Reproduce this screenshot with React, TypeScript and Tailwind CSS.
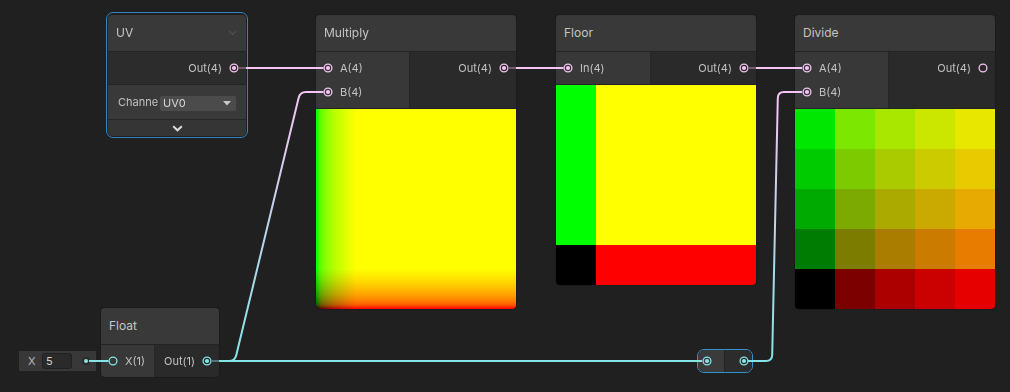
import React from 'react';

type C = 'pink' | 'cyan';

function PortIcon({ c, filled = true }: { c: C; filled?: boolean }) {
  const col = c === 'pink' ? '#f5c4f2' : '#84e4e7';
  return (
    <svg width="10" height="10" viewBox="0 0 10 10" className="block shrink-0">
      <circle cx="5" cy="5" r="3.9" fill="none" stroke={col} strokeWidth="1.3" />
      {filled && <circle cx="5" cy="5" r="2.1" fill={col} />}
    </svg>
  );
}

function Header({ title, chevron = false }: { title: string; chevron?: boolean }) {
  return (
    <div className="h-[37px] shrink-0 bg-[#393939] border-b border-[#232323] flex items-center justify-between pl-[8px] pr-[9px] text-[12px] text-[#c4c4c4]">
      <span>{title}</span>
      {chevron && (
        <svg width="9" height="6" viewBox="0 0 9 6">
          <polyline points="1,1 4.5,4.5 8,1" fill="none" stroke="#4f4f4f" strokeWidth="1.2" />
        </svg>
      )}
    </div>
  );
}

function InRow({ label, c, filled = true }: { label: string; c: C; filled?: boolean }) {
  return (
    <div className="h-6 flex items-center pl-[7px] gap-[7px] text-[11px] text-[#c2c2c2] whitespace-nowrap">
      <PortIcon c={c} filled={filled} />
      <span>{label}</span>
    </div>
  );
}

function OutRow({ label, c, filled = true }: { label: string; c: C; filled?: boolean }) {
  return (
    <div className="h-6 flex items-center justify-end pr-[7px] gap-[7px] text-[11px] text-[#c2c2c2] whitespace-nowrap">
      <span>{label}</span>
      <PortIcon c={c} filled={filled} />
    </div>
  );
}

function MultiplyPreview() {
  return (
    <div className="relative w-[200px] h-[200px] bg-[image:linear-gradient(to_right,#000000_0px,#590000_4px,#7c0000_8px,#950000_12px,#aa0000_16px,#bc0000_20px,#cb0000_24px,#da0000_28px,#e70000_32px,#f30000_36px,#ff0000_40px)]">
      <div className="absolute inset-0 mix-blend-screen bg-[image:linear-gradient(to_top,#000000_0px,#005900_4px,#007c00_8px,#009500_12px,#00aa00_16px,#00bc00_20px,#00cb00_24px,#00da00_28px,#00e700_32px,#00f300_36px,#00ff00_40px)]" />
    </div>
  );
}

function FloorPreview() {
  return (
    <div className="w-[200px] h-[200px] flex flex-col">
      <div className="h-[160px] flex">
        <div className="w-[40px] bg-[#00ff00]" />
        <div className="flex-1 bg-[#ffff00]" />
      </div>
      <div className="h-[40px] flex">
        <div className="w-[40px] bg-[#000000]" />
        <div className="flex-1 bg-[#ff0000]" />
      </div>
    </div>
  );
}

const divideCells = [
  'bg-[#00e700]', 'bg-[#7ce700]', 'bg-[#aae700]', 'bg-[#cbe700]', 'bg-[#e7e700]',
  'bg-[#00cb00]', 'bg-[#7ccb00]', 'bg-[#aacb00]', 'bg-[#cbcb00]', 'bg-[#e7cb00]',
  'bg-[#00aa00]', 'bg-[#7caa00]', 'bg-[#aaaa00]', 'bg-[#cbaa00]', 'bg-[#e7aa00]',
  'bg-[#007c00]', 'bg-[#7c7c00]', 'bg-[#aa7c00]', 'bg-[#cb7c00]', 'bg-[#e77c00]',
  'bg-[#000000]', 'bg-[#7c0000]', 'bg-[#aa0000]', 'bg-[#cb0000]', 'bg-[#e70000]',
];

function DividePreview() {
  return (
    <div className="w-[200px] h-[200px] grid grid-cols-5 grid-rows-5">
      {divideCells.map((cls, i) => (
        <div key={i} className={cls} />
      ))}
    </div>
  );
}

function Wires() {
  return (
    <svg
      className="absolute inset-0 z-10 pointer-events-none"
      width="1010"
      height="392"
      viewBox="0 0 1010 392"
    >
      <defs>
        <linearGradient id="g1" gradientUnits="userSpaceOnUse" x1="0" y1="361" x2="0" y2="92">
          <stop offset="0" stopColor="#84e4e7" />
          <stop offset="1" stopColor="#f5c4f2" />
        </linearGradient>
        <linearGradient id="g2" gradientUnits="userSpaceOnUse" x1="0" y1="361" x2="0" y2="92">
          <stop offset="0" stopColor="#84e4e7" />
          <stop offset="1" stopColor="#f5c4f2" />
        </linearGradient>
      </defs>
      <g strokeWidth="2" fill="none">
        <path d="M238.5 68 H246" stroke="#6c5c6b" />
        <path d="M508.5 68 H516" stroke="#6c5c6b" />
        <path d="M748.5 68 H756" stroke="#6c5c6b" />
        <path d="M212 361 H219" stroke="#4e7475" />
      </g>
      <g strokeWidth="2" fill="none" stroke="#f5c4f2">
        <path d="M246 68 H323.5" />
        <path d="M516 68 H563.5" />
        <path d="M756 68 H802" />
      </g>
      <g strokeWidth="2" fill="none" stroke="#84e4e7">
        <path d="M89 361 H108.5" />
        <path d="M219 361 H702" />
      </g>
      <path
        d="M219 361 H229 Q235 361 236.3 355 L298.6 98 Q300 92 306 92 H323.5"
        stroke="url(#g1)"
        strokeWidth="2"
        fill="none"
      />
      <path
        d="M748 361 H766 Q772 361 772.2 355 L777.8 98 Q778 92 784 92 H802"
        stroke="url(#g2)"
        strokeWidth="2"
        fill="none"
      />
    </svg>
  );
}

export default function App() {
  return (
    <div className="relative w-[1010px] h-[392px] bg-[#202020] overflow-hidden font-['Inter','Noto_Sans',sans-serif] select-none">
      {/* UV node */}
      <div className="absolute left-[108px] top-[15px] w-[138px]">
        <div className="absolute -inset-x-[2px] -top-[3px] -bottom-[2px] rounded-[7px] border border-[#2f85c0]" />
        <div className="relative flex flex-col rounded-[4px] overflow-hidden">
          <Header title="UV" chevron />
          <div className="h-[33px] bg-[#2c2c2c] border-b border-[#232323] py-1">
            <OutRow label="Out(4)" c="pink" />
          </div>
          <div className="h-[35px] bg-[#393939] border-b border-[#262626] flex items-center pl-[10px] pr-[9px]">
            <div className="w-[41px] whitespace-nowrap text-[11px] text-[#c2c2c2] mt-[1px]">Channe</div>
            <div className="flex-1 h-[17px] mt-[2px] rounded-[3px] bg-[#4b4b4b] border border-[#3a3a3a] flex items-center justify-between pl-[3px] pr-[5px] text-[11px] text-[#d6d6d6]">
              <span>UV0</span>
              <svg width="8" height="5" viewBox="0 0 8 5">
                <polygon points="0,0 8,0 4,4.5" fill="#c8c8c8" />
              </svg>
            </div>
          </div>
          <div className="h-[16px] bg-[#353535] flex items-center justify-center">
            <svg width="11" height="7" viewBox="0 0 11 7">
              <polyline points="1.2,1.2 5.5,5.3 9.8,1.2" fill="none" stroke="#dcdcdc" strokeWidth="2" />
            </svg>
          </div>
        </div>
      </div>

      {/* Multiply node */}
      <div className="absolute left-[316px] top-[15px] w-[200px] flex flex-col rounded-[4px] overflow-hidden shadow-[0_0_0_1px_#1b1b1b]">
        <Header title="Multiply" />
        <div className="h-[57px] flex border-b border-[#232323]">
          <div className="w-[94px] bg-[#383838] border-r border-[#262626] py-1">
            <InRow label="A(4)" c="pink" />
            <InRow label="B(4)" c="pink" />
          </div>
          <div className="flex-1 bg-[#2a2a2a] py-1">
            <OutRow label="Out(4)" c="pink" />
          </div>
        </div>
        <MultiplyPreview />
      </div>

      {/* Floor node */}
      <div className="absolute left-[556px] top-[15px] w-[200px] flex flex-col rounded-[4px] overflow-hidden shadow-[0_0_0_1px_#1b1b1b]">
        <Header title="Floor" />
        <div className="h-[33px] flex border-b border-[#232323]">
          <div className="w-[95px] bg-[#383838] border-r border-[#262626] py-1">
            <InRow label="In(4)" c="pink" />
          </div>
          <div className="flex-1 bg-[#2a2a2a] py-1">
            <OutRow label="Out(4)" c="pink" />
          </div>
        </div>
        <FloorPreview />
      </div>

      {/* Divide node */}
      <div className="absolute left-[795px] top-[15px] w-[200px] flex flex-col rounded-[4px] overflow-hidden shadow-[0_0_0_1px_#1b1b1b]">
        <Header title="Divide" />
        <div className="h-[57px] flex border-b border-[#232323]">
          <div className="w-[94px] bg-[#383838] border-r border-[#262626] py-1">
            <InRow label="A(4)" c="pink" />
            <InRow label="B(4)" c="pink" />
          </div>
          <div className="flex-1 bg-[#2a2a2a] py-1">
            <OutRow label="Out(4)" c="pink" filled={false} />
          </div>
        </div>
        <DividePreview />
      </div>

      {/* Float inline value */}
      <div className="absolute left-[19px] top-[351px] w-[77px] h-[20px] bg-[#383838] flex items-center pl-[9px] text-[11px]">
        <span className="text-[#b8b8b8] w-[14px]">X</span>
        <div className="w-[30px] h-[16px] rounded-[3px] bg-[#2a2a2a] border border-[#212121] flex items-center pl-[3px] text-[#d4d4d4]">5</div>
        <div className="ml-[10px] w-[8px] h-[8px] rounded-full bg-[#2a2a2a] flex items-center justify-center">
          <div className="w-[4px] h-[4px] rounded-full bg-[#84e4e7]" />
        </div>
      </div>

      {/* Float node */}
      <div className="absolute left-[101px] top-[308px] w-[118px] flex flex-col rounded-[4px] overflow-hidden shadow-[0_0_0_1px_#1b1b1b]">
        <Header title="Float" />
        <div className="h-[32px] flex">
          <div className="w-[54px] bg-[#383838] border-r border-[#262626] py-1">
            <InRow label="X(1)" c="cyan" filled={false} />
          </div>
          <div className="flex-1 bg-[#2a2a2a] py-1">
            <OutRow label="Out(1)" c="cyan" />
          </div>
        </div>
      </div>

      {/* Redirect node */}
      <div className="absolute left-[697px] top-[349px] w-[56px] h-[24px] rounded-[7px] border border-[#3592d0] overflow-hidden flex">
        <div className="w-[27px] bg-[#3b3b3b] border-r border-[#222222] flex items-center pl-[4px]">
          <PortIcon c="cyan" />
        </div>
        <div className="flex-1 bg-[#2c2c2c] flex items-center justify-end pr-[3px]">
          <PortIcon c="cyan" />
        </div>
      </div>

      <Wires />
    </div>
  );
}
